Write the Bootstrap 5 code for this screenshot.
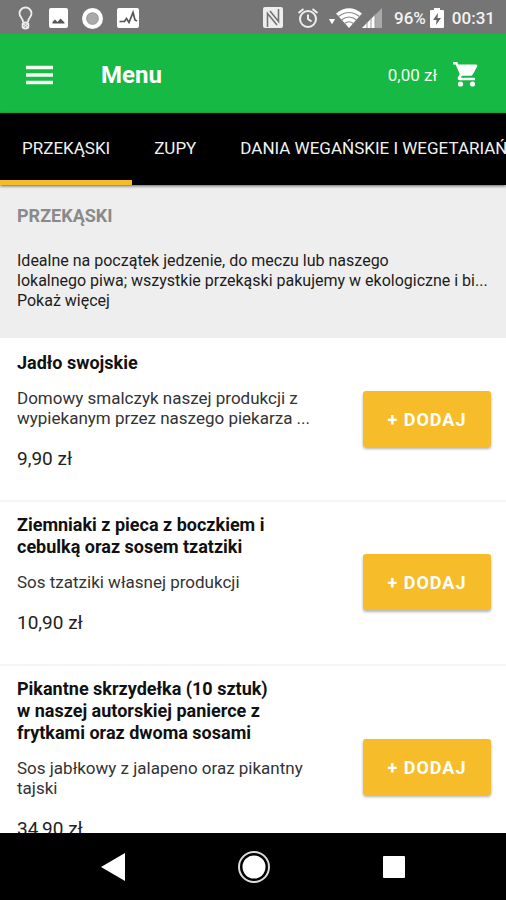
<!DOCTYPE html>
<html lang="pl">
<head>
<meta charset="utf-8">
<meta name="viewport" content="width=device-width, initial-scale=1">
<title>Menu</title>
<link href="https://cdn.jsdelivr.net/npm/bootstrap@5.3.0/dist/css/bootstrap.min.css" rel="stylesheet">
<style>
  body { font-family: Roboto, "Noto Sans", sans-serif; color: #1c1c1c; background: #fff; }
  svg { display: block; flex: none; }
  .status-bar { height: 34px; background: #757575; color: #f2f2f2; font-size: 17px; line-height: 20px; padding: 2px 11px 0 16px; }
  .status-left { gap: 14px; }
  .app-bar { height: 79px; background: #16b943; color: #fff; padding: 2px 28px 0 26px; }
  .app-title { font-size: 24px; line-height: 32px; }
  .basket { font-size: 17px; line-height: 20px; color: #f0fff2; }
  .plain-btn { background: none; border: 0; padding: 0; color: inherit; }
  .tab-strip { height: 72px; background: #000; position: relative; z-index: 1; box-shadow: 0 1px 3px rgba(0,0,0,.6); }
  .tab-link { color: #f2f2f2; font-size: 17px; line-height: 20px; padding: 2px 22px 0; border-bottom: 5px solid transparent; white-space: nowrap; text-decoration: none; }
  .tab-link.active { border-color: #f5bc2a; }
  .intro { background: #eee; padding: 20px 17px 27px; font-size: 16px; line-height: 20px; }
  .intro-title { color: #8a8a8a; font-size: 18px; line-height: 22px; margin-bottom: 24px; }
  .more-link { color: inherit; text-decoration: none; }
  .dish { padding: 14px 15px 14px 17px; }
  .dish + .dish { border-top: 2px solid #f5f5f5; padding-top: 12px; }
  .dish-text { max-width: 300px; padding-bottom: 16px; }
  .dish-name { font-size: 18px; line-height: 22px; margin-bottom: 14px; color: #111; }
  .dish-info { font-size: 17px; line-height: 20px; margin-bottom: 20px; color: #333; }
  .dish-price { font-size: 19px; line-height: 22px; color: #222; }
  .add-btn { width: 128px; height: 56px; background: #f6bc2a; color: #fff; border: 0; border-radius: 3px; font-size: 18px; font-weight: 700; letter-spacing: 1px; box-shadow: 0 2px 3px rgba(0,0,0,.3); }
  .system-nav { height: 67px; background: #000; color: #fff; padding: 0 96px 0 98px; }
</style>
</head>
<body class="d-flex flex-column vh-100 overflow-hidden">
<div class="status-bar d-flex align-items-center justify-content-between flex-shrink-0">
  <div class="status-left d-flex align-items-center">
    <svg width="19" height="24" viewBox="0 0 19 24" fill="none" stroke="#eee" stroke-width="1.8"><path d="M7 16C7 12 3.500 11 3.500 7.500A6 6 0 0 1 15.500 7.500C15.500 11 12 12 12 16"/><circle cx="9.500" cy="19.500" r="3"/><path d="M6 17l7 5M13 17l-7 5" stroke-width="1.200"/></svg>
    <svg width="19" height="20" viewBox="0 0 19 20"><rect width="19" height="20" rx="2" fill="#fff"/><path d="M3.500 15.500v-1.500l2.500-2.500 2.500 2.500 3-3.500 4 4v1z" fill="#555"/></svg>
    <svg width="21" height="21" viewBox="0 0 20 20"><circle cx="10" cy="10" r="10" fill="#fff"/><circle cx="10" cy="10" r="5.500" fill="#aaa" stroke="#999"/></svg>
    <svg width="22" height="20" viewBox="0 0 22 20"><rect width="22" height="20" rx="2" fill="#fff"/><path d="M2.500 13.500h5l2-3 2.500 4 4-10 2 7.500 2 1" fill="none" stroke="#555" stroke-width="1.700"/></svg>
  </div>
  <div class="d-flex align-items-center">
    <svg width="22" height="22" viewBox="0 0 22 22" class="me-2"><rect x="1" width="20" height="21" rx="2" fill="#eee"/><path d="M5.500 20V6.500L15 18M16.500 2v12.500L8 4" fill="none" stroke="#757575" stroke-width="1.600"/></svg>
    <svg width="24" height="24" viewBox="0 0 24 24" fill="none" stroke="#eee" stroke-width="2" class="ms-1 me-2"><circle cx="12" cy="13" r="8"/><path d="M12 8.500V13l3.500 2.500M2.500 7l5-4M21.500 7l-5-4"/></svg>
    <svg width="8" height="22" viewBox="0 0 9 22"><path d="M1 12h7l-3.500 6z" fill="#fff"/></svg>
    <svg width="26" height="22" viewBox="0 0 26 22"><path d="M0 6.500Q13-4 26 6.500L13 21z" fill="#fff"/><path d="M2.500 9.500q10.500-8 21 0M5.500 13q7.500-6 15 0M8.500 16.500q4.500-3.500 9 0" fill="none" stroke="#8a8a8a" stroke-width="1.200"/></svg>
    <svg width="20" height="20" viewBox="0 0 20 20" class="me-2"><path d="M0 20L20 0v20z" fill="#aaa"/><path d="M0 20L13 7v13z" fill="#fff"/><path d="M5 14v6M9 10v10M13 6v14" stroke="#999"/></svg>
    <span class="fw-medium ms-1 me-1">96%</span>
    <svg width="14" height="22" viewBox="0 0 14 22" class="me-2"><path d="M4 1h6v2h3q1 0 1 1v16q0 1-1 1H1q-1 0-1-1V4q0-1 1-1h3z" fill="#fff"/><path d="M8 6l-5 7h3.500L6 18l5-7H7.500z" fill="#666"/></svg>
    <span class="fw-medium">00:31</span>
  </div>
</div>

<header class="app-bar d-flex align-items-center flex-shrink-0">
  <button class="plain-btn" type="button" aria-label="Otwórz menu"><svg width="27" height="20" viewBox="0 0 27 20" stroke="#f2fff2" stroke-width="3.400"><path d="M0 2.500h27M0 10h27M0 17.500h27"/></svg></button>
  <h1 class="app-title fw-bold mb-0 ms-5">Menu</h1>
  <span class="basket ms-auto me-3">0,00 zł</span>
  <button class="plain-btn" type="button" aria-label="Koszyk"><svg width="25" height="25" viewBox="0 0 25 25" fill="#fff"><path d="M0 0h4.200l1.300 2.600H23q2 0 1.200 1.800l-4.500 8q-.7 1.300-2 1.300H9l-1.200 2.100H22v2.500H7q-3.300-.4-2-3.400l1.700-3L2.600 2.600H0z"/><circle cx="7.500" cy="22" r="2.600"/><circle cx="19.500" cy="22" r="2.600"/></svg></button>
</header>

<nav class="tab-strip d-flex overflow-hidden flex-shrink-0" aria-label="Kategorie">
  <a class="tab-link active d-flex align-items-center" href="#przekaski" aria-current="true">PRZEKĄSKI</a>
  <a class="tab-link d-flex align-items-center" href="#zupy">ZUPY</a>
  <a class="tab-link d-flex align-items-center" href="#dania">DANIA WEGAŃSKIE I WEGETARIAŃSKIE</a>
</nav>

<main class="flex-grow-1 overflow-hidden" id="przekaski">
  <section class="intro">
    <h2 class="intro-title fw-bold">PRZEKĄSKI</h2>
    <p class="mb-0">Idealne na początek jedzenie, do meczu lub naszego<br>lokalnego piwa; wszystkie przekąski pakujemy w ekologiczne i bi...</p>
    <a class="more-link d-block" href="#wiecej">Pokaż więcej</a>
  </section>
  <article class="dish d-flex align-items-center justify-content-between">
    <div class="dish-text">
      <h3 class="dish-name fw-bold">Jadło swojskie</h3>
      <p class="dish-info">Domowy smalczyk naszej produkcji z<br>wypiekanym przez naszego piekarza ...</p>
      <div class="dish-price">9,90 zł</div>
    </div>
    <button class="add-btn flex-shrink-0" type="button">+ DODAJ</button>
  </article>
  <article class="dish d-flex align-items-center justify-content-between">
    <div class="dish-text">
      <h3 class="dish-name fw-bold">Ziemniaki z pieca z boczkiem i<br>cebulką oraz sosem tzatziki</h3>
      <p class="dish-info">Sos tzatziki własnej produkcji</p>
      <div class="dish-price">10,90 zł</div>
    </div>
    <button class="add-btn flex-shrink-0" type="button">+ DODAJ</button>
  </article>
  <article class="dish d-flex align-items-center justify-content-between">
    <div class="dish-text">
      <h3 class="dish-name fw-bold">Pikantne skrzydełka (10 sztuk)<br>w naszej autorskiej panierce z<br>frytkami oraz dwoma sosami</h3>
      <p class="dish-info">Sos jabłkowy z jalapeno oraz pikantny<br>tajski</p>
      <div class="dish-price">34,90 zł</div>
    </div>
    <button class="add-btn flex-shrink-0" type="button">+ DODAJ</button>
  </article>
</main>

<footer class="system-nav d-flex align-items-center justify-content-between flex-shrink-0">
  <button class="plain-btn" type="button" aria-label="Wstecz"><svg width="32" height="32" viewBox="0 0 32 32"><path d="M3 16L27 2v28z" fill="#fff"/></svg></button>
  <button class="plain-btn" type="button" aria-label="Ekran główny"><svg width="34" height="34" viewBox="0 0 34 34"><circle cx="17" cy="17" r="15" fill="none" stroke="#ddd" stroke-width="2"/><circle cx="17" cy="17" r="11.500" fill="#fff"/></svg></button>
  <button class="plain-btn" type="button" aria-label="Ostatnie"><svg width="32" height="32" viewBox="0 0 32 32"><rect x="5" y="5" width="22" height="22" rx="1" fill="#fff"/></svg></button>
</footer>
<script src="https://cdn.jsdelivr.net/npm/bootstrap@5.3.0/dist/js/bootstrap.bundle.min.js"></script>
</body>
</html>
